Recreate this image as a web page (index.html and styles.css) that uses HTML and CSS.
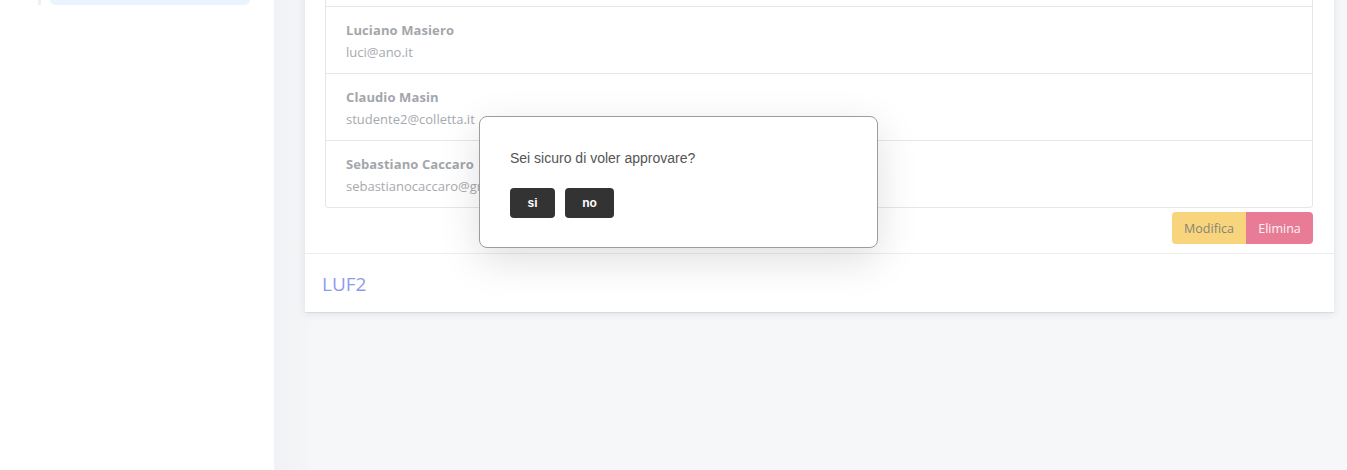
FILE: index.html
```html
<!DOCTYPE html>
<html lang="it">
<head>
<meta charset="utf-8">
<title>Approvazione</title>
<link rel="stylesheet" href="styles.css">
</head>
<body>
<div class="layout">
  <aside class="sidebar">
    <div class="nav-item">
      <span class="nav-mark"></span>
      <span class="nav-pill"></span>
    </div>
  </aside>
  <main class="main">
    <section class="card">
      <div class="card-body">
        <ul class="list">
          <li class="row row-hidden"></li>
          <li class="row">
            <div class="name">Luciano Masiero</div>
            <div class="email">luci@ano.it</div>
          </li>
          <li class="row">
            <div class="name">Claudio Masin</div>
            <div class="email">studente2@colletta.it</div>
          </li>
          <li class="row">
            <div class="name">Sebastiano Caccaro</div>
            <div class="email">sebastianocaccaro@gmail.com</div>
          </li>
        </ul>
        <div class="actions">
          <button class="btn btn-edit">Modifica</button>
          <button class="btn btn-del">Elimina</button>
        </div>
      </div>
      <div class="card-next">LUF2</div>
    </section>
  </main>
</div>
<div class="modal">
  <p class="modal-text">Sei sicuro di voler approvare?</p>
  <div class="modal-buttons">
    <button class="mbtn mbtn-si">si</button>
    <button class="mbtn mbtn-no">no</button>
  </div>
</div>
</body>
</html>
```
FILE: styles.css
```css
html, body {
  margin: 0;
  padding: 0;
  height: 100%;
  overflow: hidden;
}
body {
  font-family: "Open Sans", "Liberation Sans", sans-serif;
  background: #f5f6f8;
}
.layout {
  display: flex;
  height: 470px;
}
.sidebar {
  width: 274px;
  flex: 0 0 274px;
  background: #ffffff;
}
.nav-item {
  display: flex;
  align-items: flex-start;
  height: 5px;
  padding-left: 38px;
}
.nav-mark {
  width: 3px;
  height: 5px;
  background: #e7f2fd;
}
.nav-pill {
  margin-left: 9px;
  width: 200px;
  height: 5px;
  background: #eaf4fe;
  border-radius: 0 0 6px 6px;
}
.main {
  flex: 1;
  background: linear-gradient(to right, #f1f2f5 0, #f3f4f6 26px, #f6f7f9 40px);
  padding: 0 13px 0 31px;
}
.card {
  margin-top: -81px;
  background: #ffffff;
  box-shadow: 0 2px 8px rgba(40, 40, 70, 0.10), 0 1px 0 #e6e6ec;
}
.card-body {
  padding: 20px 21px 9px 20px;
}
.list {
  list-style: none;
  margin: 0;
  padding: 0;
  border: 1px solid #e6e6e6;
  border-radius: 3px;
}
.row {
  height: 67px;
  box-sizing: border-box;
  padding: 13px 20px 0 20px;
  border-top: 1px solid #e6e6e6;
}
.row-hidden {
  height: 66px;
  border-top: 0;
}
.name {
  font-size: 13px;
  font-weight: 700;
  color: #a3a6ab;
  line-height: 20px;
  letter-spacing: 0.1px;
}
.email {
  font-size: 13px;
  color: #a6a9ae;
  line-height: 20px;
  margin-top: 2px;
}
.actions {
  display: flex;
  justify-content: flex-end;
  margin-top: 4px;
}
.btn {
  border: 0;
  font-family: "Open Sans", "Liberation Sans", sans-serif;
  font-size: 12.5px;
  height: 32px;
  padding: 0 12px;
  margin: 0;
  cursor: pointer;
}
.btn-edit {
  width: 74px;
  background: #f8d57d;
  color: #868478;
  border-radius: 4px 0 0 4px;
}
.btn-del {
  width: 67px;
  background: #e87b96;
  color: #fdf3f6;
  border-radius: 0 4px 4px 0;
}
.card-next {
  border-top: 1px solid #ededf0;
  height: 59px;
  box-sizing: border-box;
  padding: 17px 17px 0 17px;
  font-size: 19px;
  color: #8f9bee;
  line-height: 26px;
}
.modal {
  position: absolute;
  left: 479px;
  top: 116px;
  width: 337px;
  height: 130px;
  background: #ffffff;
  border: 1px solid #9c9c9c;
  border-radius: 8px;
  box-shadow: 0 12px 40px rgba(0, 0, 0, 0.13);
  padding: 0 30px;
  font-family: "Liberation Sans", Arial, sans-serif;
}
.modal-text {
  margin: 32px 0 0 0;
  font-size: 14px;
  line-height: 18px;
  color: #555555;
}
.modal-buttons {
  display: flex;
  gap: 10px;
  margin-top: 21px;
}
.mbtn {
  border: 0;
  height: 30px;
  background: #333333;
  color: #ffffff;
  font-family: "Liberation Sans", Arial, sans-serif;
  font-weight: 700;
  font-size: 12px;
  border-radius: 4px;
  padding: 0;
}
.mbtn-si { width: 45px; }
.mbtn-no { width: 49px; }
```
